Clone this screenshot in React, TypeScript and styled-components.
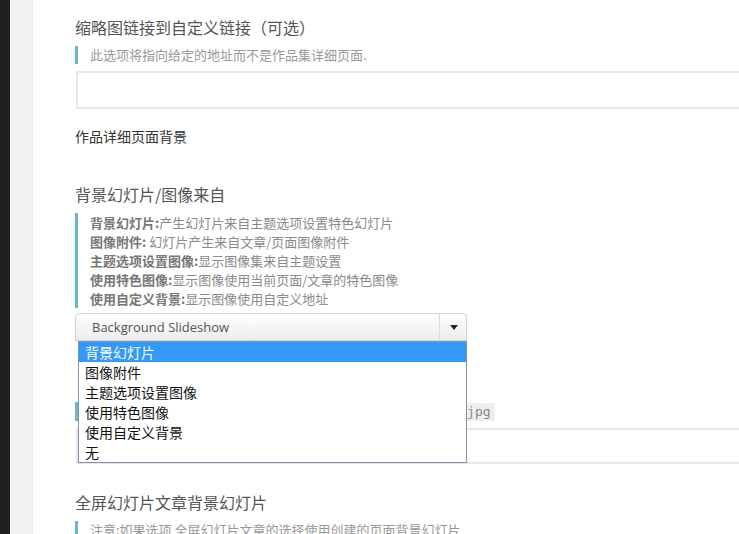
import React from "react";
import styled, { createGlobalStyle } from "styled-components";

const Global = createGlobalStyle`
  html, body { margin: 0; padding: 0; background: #fff; overflow: hidden; }
  body { font-family: "Noto Sans CJK SC", "Open Sans", sans-serif; }
`;

const Page = styled.div`
  display: flex;
  width: 1000px;
  min-height: 534px;
`;

const DarkBar = styled.div`
  width: 10px;
  flex: none;
  background: #1f1f1f;
`;

const Gutter = styled.div`
  width: 22px;
  flex: none;
  background: #f1f1f1;
  border-right: 1px solid #e9e9e9;
`;

const Content = styled.div`
  flex: 1;
  padding-left: 42px;
  display: flex;
  flex-direction: column;
  align-items: flex-start;
`;

const Heading = styled.h3<{ $top: number }>`
  margin: ${(p) => p.$top}px 0 0;
  font-size: 16px;
  line-height: 20px;
  font-weight: 400;
  color: #555;
`;

const Label = styled.div<{ $top: number }>`
  margin-top: ${(p) => p.$top}px;
  font-size: 14px;
  line-height: 20px;
  color: #333;
`;

const Note = styled.div<{ $top: number; $lh?: number }>`
  margin-top: ${(p) => p.$top}px;
  border-left: 3px solid #6cb6c5;
  padding-left: 12px;
  font-size: 13px;
  line-height: ${(p) => p.$lh ?? 18}px;
  color: #999;
  white-space: nowrap;
`;

const NoteLine = styled.div`
  color: #8a8a8a;
  b { color: #777; font-weight: 700; }
`;

const Code = styled.code`
  font-family: "DejaVu Sans Mono", "Liberation Mono", monospace;
  font-size: 13px;
  background: #eee;
  color: #888;
  padding: 1px 4px 2px 2px;
`;

const TextInput = styled.div<{ $top: number; $h: number }>`
  margin-top: ${(p) => p.$top}px;
  margin-left: 1px;
  width: 860px;
  height: ${(p) => p.$h}px;
  box-sizing: border-box;
  border: 2px solid #e7e7e7;
  background: #fff;
`;

const SelectWrap = styled.div`
  position: relative;
  margin-top: 5px;
  width: 392px;
`;

const SelectBox = styled.div`
  height: 28px;
  box-sizing: border-box;
  border: 1px solid #d4d4d4;
  border-radius: 4px 4px 0 0;
  background: linear-gradient(#ffffff, #ececec);
  box-shadow: 0 1px 2px rgba(0, 0, 0, 0.08);
  display: flex;
  align-items: center;
`;

const SelectText = styled.span`
  flex: 1;
  padding-left: 16px;
  font-family: "Open Sans", "Liberation Sans", sans-serif;
  font-size: 13px;
  color: #555;
`;

const ArrowCell = styled.span`
  width: 26px;
  height: 100%;
  border-left: 1px solid #dcdcdc;
  display: flex;
  align-items: center;
  justify-content: center;
`;

const Arrow = styled.span`
  width: 0;
  height: 0;
  border-left: 4px solid transparent;
  border-right: 4px solid transparent;
  border-top: 5px solid #222;
  margin-left: 1px;
`;

const Dropdown = styled.ul`
  position: absolute;
  top: 100%;
  left: 3px;
  right: 0;
  margin: 0;
  padding: 0;
  list-style: none;
  background: #fff;
  border: 1px solid #7f93ad;
  z-index: 5;
`;

const Option = styled.li<{ $active?: boolean }>`
  height: 20px;
  line-height: 20px;
  padding-left: 6px;
  font-size: 14px;
  color: ${(p) => (p.$active ? "#fff" : "#111")};
  background: ${(p) => (p.$active ? "#3399ff" : "transparent")};
`;

const options = ["背景幻灯片", "图像附件", "主题选项设置图像", "使用特色图像", "使用自定义背景", "无"];

export default function App() {
  return (
    <>
      <Global />
      <Page>
        <DarkBar />
        <Gutter />
        <Content>
          <Heading $top={17}>缩略图链接到自定义链接（可选）</Heading>
          <Note $top={9}>此选项将指向给定的地址而不是作品集详细页面.</Note>
          <TextInput $top={7} $h={38} />
          <Label $top={17}>作品详细页面背景</Label>
          <Heading $top={38}>背景幻灯片/图像来自</Heading>
          <Note $top={9} $lh={19}>
            <NoteLine><b>背景幻灯片:</b>产生幻灯片来自主题选项设置特色幻灯片</NoteLine>
            <NoteLine><b>图像附件:</b> 幻灯片产生来自文章/页面图像附件</NoteLine>
            <NoteLine><b>主题选项设置图像:</b>显示图像集来自主题设置</NoteLine>
            <NoteLine><b>使用特色图像:</b>显示图像使用当前页面/文章的特色图像</NoteLine>
            <NoteLine><b>使用自定义背景:</b>显示图像使用自定义地址</NoteLine>
          </Note>
          <SelectWrap>
            <SelectBox>
              <SelectText>Background Slideshow</SelectText>
              <ArrowCell><Arrow /></ArrowCell>
            </SelectBox>
            <Dropdown>
              {options.map((o, i) => (
                <Option key={o} $active={i === 0}>{o}</Option>
              ))}
            </Dropdown>
          </SelectWrap>
          <Note $top={61}>
            输入自定义背景图像的网址, 例如: <Code>http://www.site.com/bg.jpg</Code>
          </Note>
          <TextInput $top={7} $h={36} />
          <Heading $top={28}>全屏幻灯片文章背景幻灯片</Heading>
          <Note $top={9}>注意:如果选项 全屏幻灯片文章的选择使用创建的页面背景幻灯片</Note>
        </Content>
      </Page>
    </>
  );
}
